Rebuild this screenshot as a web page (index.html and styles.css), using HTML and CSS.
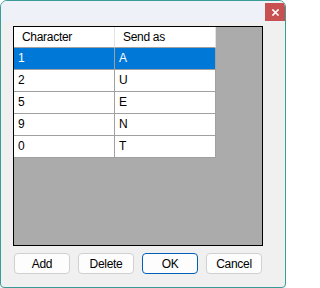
FILE: index.html
```html
<!DOCTYPE html>
<html>
<head>
<meta charset="utf-8">
<link rel="stylesheet" href="styles.css">
</head>
<body>
<div class="window">
  <div class="titlebar">
    <div class="close">
      <svg width="7" height="7" viewBox="0 0 7 7"><path d="M1 1L6 6M6 1L1 6" stroke="#fff" stroke-width="1.6" stroke-linecap="square"/></svg>
    </div>
  </div>
  <div class="content">
    <div class="grid">
      <table class="table">
        <thead>
          <tr><th>Character</th><th>Send as</th></tr>
        </thead>
        <tbody>
          <tr class="sel"><td>1</td><td>A</td></tr>
          <tr><td>2</td><td>U</td></tr>
          <tr><td>5</td><td>E</td></tr>
          <tr><td>9</td><td>N</td></tr>
          <tr><td>0</td><td>T</td></tr>
        </tbody>
      </table>
    </div>
    <div class="buttons">
      <button class="btn">Add</button>
      <button class="btn">Delete</button>
      <button class="btn default">OK</button>
      <button class="btn">Cancel</button>
    </div>
  </div>
</div>
</body>
</html>
```
FILE: styles.css
```css
* { box-sizing: border-box; }
html, body { margin: 0; padding: 0; background: #ffffff; }
body { font-family: "Liberation Sans", Arial, sans-serif; font-size: 12px; letter-spacing: -0.3px; color: #000; }
.window {
  width: 286px;
  height: 288px;
  border: 1px solid #3a9c97;
  border-radius: 7px 7px 4px 4px;
  background: #f0f0f0;
  overflow: hidden;
  display: flex;
  flex-direction: column;
}
.titlebar {
  height: 21px;
  background: #eef2f8;
  display: flex;
  justify-content: flex-end;
  align-items: flex-start;
  padding-top: 2px;
  padding-right: 0;
  flex: none;
}
.close {
  width: 20px;
  height: 18px;
  background: #c85050;
  display: flex;
  align-items: center;
  justify-content: center;
}
.close svg { display: block; }
.content {
  padding: 4px 0 0 12px;
  display: flex;
  flex-direction: column;
}
.grid {
  width: 250px;
  height: 220px;
  border: 1px solid #000;
  background: #ababab;
}
.table {
  border-collapse: separate;
  border-spacing: 0;
  table-layout: fixed;
  width: 202px;
}
.table th, .table td {
  width: 101px;
  padding: 0;
  text-align: left;
  font-weight: normal;
  white-space: nowrap;
  overflow: hidden;
  background: #fff;
}
.table th {
  height: 21px;
  padding-left: 8px;
  border-right: 1px solid #e3e3e3;
  border-bottom: 1px solid #a0a0a0;
  line-height: 20px;
}
.table td {
  height: 22px;
  padding-left: 4px;
  border-right: 1px solid #a0a0a0;
  border-bottom: 1px solid #a0a0a0;
  line-height: 21px;
}
.table tr.sel td {
  background: #0078d7;
  color: #fff;
}
.buttons {
  display: flex;
  gap: 8px;
  margin-top: 7px;
  padding-left: 1px;
}
.btn {
  width: 56px;
  height: 21px;
  padding: 0;
  font-family: inherit;
  font-size: 12px;
  letter-spacing: -0.3px;
  color: #000;
  background: #fdfdfd;
  border: 1px solid #d0d0d0;
  border-radius: 4px;
}
.btn.default {
  border: 1.5px solid #005fb8;
}
```
